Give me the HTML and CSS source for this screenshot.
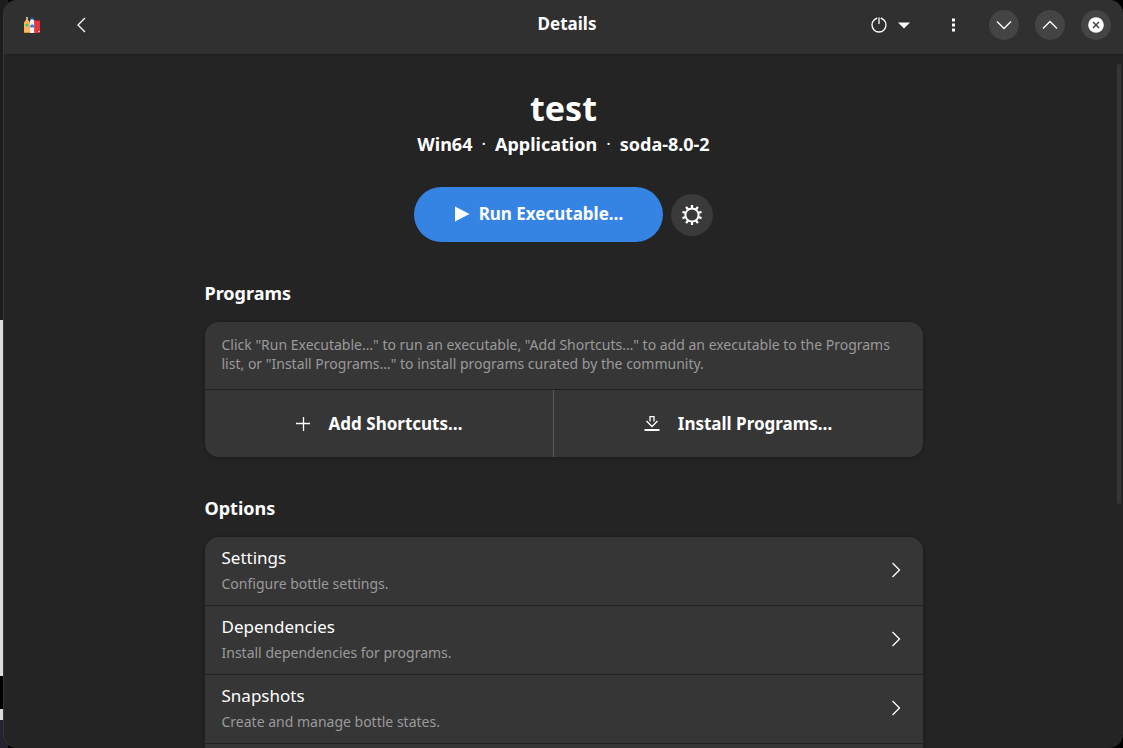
FILE: index.html
```
<!DOCTYPE html>
<html lang="en">
<head>
  <meta charset="UTF-8">
  <meta name="viewport" content="width=device-width, initial-scale=1.0">
  <title>Details</title>
  <link rel="stylesheet" href="styles.css">
</head>
<body>
  <div class="window">
    <header class="headerbar">
      <div class="header-start">
        <svg class="app-icon" width="18" height="18" viewBox="0 0 18 18" aria-hidden="true">
          <path d="M3 2.500h2V4l2 2.500V17H1V6.500L3 4z" fill="#ffb460"/>
          <rect x="3" y="1" width="2" height="1.500" fill="#c0bfbc"/>
          <rect x="1" y="16" width="6" height="1" fill="#e5913a"/>
          <circle cx="4" cy="9" r="1.600" fill="#33d17a"/>
          <path d="M8 3h2l1.500 2v12h-4.500V5z" fill="#f6f5f4"/>
          <rect x="7.500" y="1.500" width="3" height="2" fill="#1a5fb4"/>
          <path d="M7 10q2-3.500 4.500 0v1.500H7z" fill="#3584e4"/>
          <rect x="11.500" y="4" width="5.500" height="13" rx="1" fill="#ed333b"/>
          <rect x="12.500" y="4" width="4" height="1" fill="#a51d2d"/>
          <rect x="15" y="15" width="2" height="1" fill="#ffb3b3"/>
        </svg>
        <button class="flat-btn" aria-label="Back">
          <svg width="16" height="16" viewBox="0 0 16 16"><path class="line" d="M12 1L5 8l7 7"/></svg>
        </button>
      </div>
      <div class="window-title">Details</div>
      <div class="header-end">
        <button class="power-btn" aria-label="Power">
          <svg width="16" height="16" viewBox="0 0 16 16"><circle class="line" cx="8" cy="8" r="7"/><path d="M6 0h4v7H6z" fill="#303030"/><path class="line" d="M8 0.500v6.500M5.500 1.500l.8-.3M9.700 1.200l.8.3"/></svg>
          <svg width="14" height="16" viewBox="0 0 14 16"><path d="M1 5.500h12L7 11.500z" fill="#fff"/></svg>
        </button>
        <button class="flat-btn" aria-label="Menu">
          <svg width="16" height="16" viewBox="0 0 16 16"><path d="M7 1.500h3v3H7zM7 6.500h3v3H7zM7 11.500h3v3H7z" fill="#fff"/></svg>
        </button>
        <div class="window-controls">
          <button class="round-btn" aria-label="Minimize">
            <svg width="16" height="16" viewBox="0 0 16 16"><path class="line" d="M1 4.500l7 7 7-7"/></svg>
          </button>
          <button class="round-btn" aria-label="Maximize">
            <svg width="16" height="16" viewBox="0 0 16 16"><path class="line" d="M1 11.500l7-7 7 7"/></svg>
          </button>
          <button class="round-btn" aria-label="Close">
            <svg width="16" height="16" viewBox="0 0 16 16"><circle cx="8" cy="8" r="7.800" fill="#fff"/><path d="M5 5l6 6M11 5l-6 6" stroke="#444" stroke-width="1.500"/></svg>
          </button>
        </div>
      </div>
    </header>

    <main class="content">
      <h1>test</h1>
      <p class="subtitle">
        <span>Win64</span><span class="dot">·</span><span>Application</span><span class="dot">·</span><span>soda-8.0-2</span>
      </p>

      <div class="run-row">
        <button class="run-btn">
          <svg width="16" height="16" viewBox="0 0 16 16"><path d="M1 0.500v15L15.500 8z" fill="#fff"/></svg>
          Run Executable…
        </button>
        <button class="gear-btn" aria-label="Launch options">
          <svg width="20" height="20" viewBox="0 0 20 20">
            <circle cx="10" cy="10" r="6.600" fill="none" stroke="#fff" stroke-width="2"/>
            <g stroke="#fff" stroke-width="2.200">
              <path d="M10 0v3.500M10 16.500v3.500"/>
              <path d="M10 0v3.500M10 16.500v3.500" transform="rotate(36 10 10)"/>
              <path d="M10 0v3.500M10 16.500v3.500" transform="rotate(72 10 10)"/>
              <path d="M10 0v3.500M10 16.500v3.500" transform="rotate(108 10 10)"/>
              <path d="M10 0v3.500M10 16.500v3.500" transform="rotate(144 10 10)"/>
            </g>
          </svg>
        </button>
      </div>

      <section>
        <h2>Programs</h2>
        <div class="card">
          <p class="card-text">Click "Run Executable…" to run an executable, "Add Shortcuts…" to add an executable to the Programs list, or "Install Programs…" to install programs curated by the community.</p>
          <div class="card-actions">
            <button>
              <svg width="16" height="16" viewBox="0 0 16 16"><path class="line" d="M8.500 1v14M1 7.500h14"/></svg>
              Add Shortcuts…
            </button>
            <button>
              <svg width="16" height="16" viewBox="0 0 16 16"><path class="line" d="M6 5.500V.7h4v4.800M2.500 5L8 10.500 13.500 5"/><path d="M0.500 13h15v2H.5z" fill="#fff"/></svg>
              Install Programs…
            </button>
          </div>
        </div>
      </section>

      <section>
        <h2>Options</h2>
        <div class="card">
          <a href="#settings" class="row">
            <span class="row-text"><span class="row-title">Settings</span><span class="row-subtitle">Configure bottle settings.</span></span>
            <svg width="16" height="16" viewBox="0 0 16 16"><path class="line" d="M4.500 1l7 7-7 7"/></svg>
          </a>
          <a href="#dependencies" class="row">
            <span class="row-text"><span class="row-title">Dependencies</span><span class="row-subtitle">Install dependencies for programs.</span></span>
            <svg width="16" height="16" viewBox="0 0 16 16"><path class="line" d="M4.500 1l7 7-7 7"/></svg>
          </a>
          <a href="#snapshots" class="row">
            <span class="row-text"><span class="row-title">Snapshots</span><span class="row-subtitle">Create and manage bottle states.</span></span>
            <svg width="16" height="16" viewBox="0 0 16 16"><path class="line" d="M4.500 1l7 7-7 7"/></svg>
          </a>
          <div class="row"></div>
        </div>
      </section>
    </main>
    <div class="scrollbar"></div>
  </div>
</body>
</html>
```

FILE: styles.css
```
* {
  box-sizing: border-box;
}

body {
  margin: 0;
  height: 100vh;
  padding-left: 3px;
  overflow: hidden;
  font-family: "Noto Sans", sans-serif;
  font-size: 17px;
  color: #fff;
  /* desktop behind the window */
  background: linear-gradient(#1c1c1c 320px, #dcdcdc 320px, #dcdcdc 676px, #000 676px, #000 709px, #dcdcdc 709px, #dcdcdc 720px, #23232f 720px) left / 8px 100% no-repeat #000;
}

h1,
h2,
p {
  margin: 0;
}

button {
  font: inherit;
  font-weight: bold;
  color: inherit;
  background: none;
  border: none;
  padding: 0;
  display: flex;
  align-items: center;
  justify-content: center;
  cursor: pointer;
}

svg {
  display: block;
  flex: none;
}

.line {
  fill: none;
  stroke: #fff;
  stroke-width: 1.3;
}

.window {
  position: relative;
  height: 100%;
  display: flex;
  flex-direction: column;
  overflow: hidden;
  background-color: #242424;
  border-left: 1px solid #363636;
  border-radius: 14px;
}

/* header bar */
.headerbar {
  flex: none;
  display: grid;
  grid-template-columns: 1fr auto 1fr;
  align-items: center;
  height: 55px;
  padding: 0 12px 4px 19px;
  background-color: #303030;
  border-bottom: 1px solid #1f1f1f;
}

.header-start,
.header-end,
.window-controls {
  display: flex;
  align-items: center;
}

.header-start {
  gap: 24px;
}

.header-end {
  justify-content: flex-end;
  gap: 20px;
}

.window-title {
  font-weight: bold;
  line-height: 22px;
  padding-bottom: 2px;
}

.flat-btn {
  width: 32px;
  height: 32px;
}

.power-btn {
  gap: 10px;
  height: 32px;
  margin-right: 6px;
}

.window-controls {
  gap: 16px;
}

.round-btn {
  width: 30px;
  height: 30px;
  border-radius: 50%;
  background-color: #444;
}

/* page */
.content {
  width: 100%;
  max-width: 750px;
  margin: 0 auto;
  padding: 29px 16px;
}

h1 {
  font-size: 34px;
  line-height: 48px;
  text-align: center;
}

.subtitle {
  display: flex;
  justify-content: center;
  gap: 9px;
  font-size: 18px;
  font-weight: bold;
  line-height: 24px;
}

.dot {
  font-size: 17px;
  font-weight: normal;
}

.run-row {
  display: flex;
  justify-content: center;
  align-items: center;
  gap: 8px;
  margin-top: 31px;
}

.run-btn {
  height: 55px;
  padding: 0 40px 2px;
  gap: 9px;
  border-radius: 28px;
  background-color: #3584e4;
}

.gear-btn {
  width: 42px;
  height: 42px;
  border-radius: 50%;
  background-color: #3a3a3a;
}

section {
  margin-top: 37px;
}

h2 {
  font-size: 18px;
  line-height: 28px;
}

.card {
  margin-top: 15px;
  border-radius: 14px;
  overflow: hidden;
  background-color: #363636;
  box-shadow: 0 1px 4px rgba(0, 0, 0, 0.25);
}

.card-text {
  padding: 13px 17px 16px;
  font-size: 14px;
  line-height: 19px;
  color: #9a9a9a;
}

.card-actions {
  display: flex;
  border-top: 1px solid #222;
}

.card-actions button {
  flex: auto;
  height: 67px;
  gap: 18px;
}

.card-actions button + button {
  border-left: 1px solid #5a5a5a;
}

.row {
  display: flex;
  align-items: center;
  justify-content: space-between;
  height: 69px;
  padding: 0 19px 2px 17px;
  color: inherit;
  text-decoration: none;
  border-bottom: 1px solid #222;
}

.row-text {
  display: flex;
  flex-direction: column;
  gap: 4px;
}

.row-title {
  line-height: 24px;
}

.row-subtitle {
  font-size: 14px;
  line-height: 20px;
  color: #9a9a9a;
}

.scrollbar {
  position: absolute;
  top: 64px;
  right: 2px;
  width: 4px;
  height: 440px;
  border-radius: 2px;
  background-color: #363636;
}
```
